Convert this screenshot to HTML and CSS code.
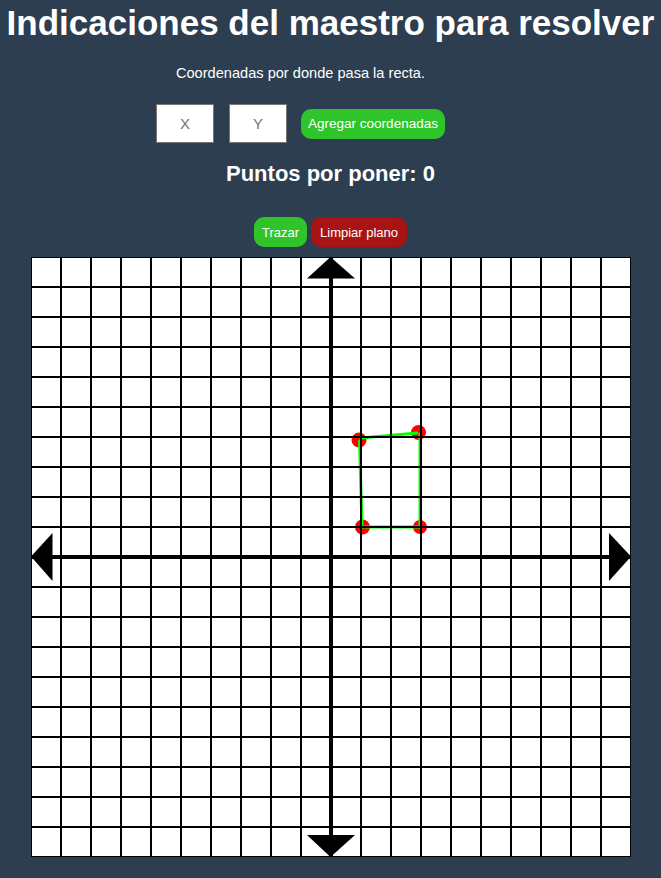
FILE: index.html
```html
<!DOCTYPE html>
<html lang="es">
<head>
<meta charset="utf-8">
<title>Indicaciones</title>
<link rel="stylesheet" href="styles.css">
</head>
<body>
<h1 class="title">Indicaciones del maestro para resolver</h1>
<section class="coords">
  <p class="label">Coordenadas por donde pasa la recta.</p>
  <div class="coord-row">
    <input class="coord-input" type="text" placeholder="X">
    <input class="coord-input" type="text" placeholder="Y">
    <button class="btn btn-green btn-add">Agregar coordenadas</button>
  </div>
</section>
<h2 class="count">Puntos por poner: 0</h2>
<div class="actions">
  <button class="btn btn-green">Trazar</button>
  <button class="btn btn-red">Limpiar plano</button>
</div>
<div class="plane-wrap">
<svg class="plane" width="600" height="600" viewBox="0 0 600 600" xmlns="http://www.w3.org/2000/svg">
  <rect x="0" y="0" width="600" height="600" fill="#fff"/>
  <g fill="#ff0000">
    <circle cx="328" cy="183" r="7.5"/>
    <circle cx="387.5" cy="175.5" r="7.5"/>
    <circle cx="331.5" cy="270" r="7.5"/>
    <circle cx="389" cy="270" r="7"/>
  </g>
  <g stroke="#00ff00" stroke-width="3" fill="none" stroke-linecap="round">
    <line x1="330" y1="181" x2="386" y2="176"/>
    <line x1="389" y1="177" x2="389" y2="270"/>
    <line x1="331" y1="270" x2="389" y2="270"/>
    <line x1="328.5" y1="184" x2="331" y2="269"/>
  </g>
  <g stroke="#000" stroke-width="2">
    <path d="M0 0V600M30 0V600M60 0V600M90 0V600M120 0V600M150 0V600M180 0V600M210 0V600M240 0V600M270 0V600M330 0V600M360 0V600M390 0V600M420 0V600M450 0V600M480 0V600M510 0V600M540 0V600M570 0V600M600 0V600"/>
    <path d="M0 0H600M0 30H600M0 60H600M0 90H600M0 120H600M0 150H600M0 180H600M0 210H600M0 240H600M0 270H600M0 330H600M0 360H600M0 390H600M0 420H600M0 450H600M0 480H600M0 510H600M0 540H600M0 570H600M0 600H600"/>
  </g>
  <g stroke="#000" stroke-width="4">
    <line x1="300" y1="0" x2="300" y2="600"/>
    <line x1="0" y1="300" x2="600" y2="300"/>
  </g>
  <g fill="#000">
    <polygon points="299.5,0 276,21.5 324,21.5"/>
    <polygon points="299.5,600 276,578 324,578"/>
    <polygon points="0,299.5 21.5,276 21.5,324"/>
    <polygon points="600,299.5 578,276 578,324"/>
  </g>
</svg>
</div>
</body>
</html>
```
FILE: styles.css
```css
html, body {
  margin: 0;
  padding: 0;
}
body {
  background: #2c3e50;
  color: #fff;
  font-family: "Liberation Sans", Arial, sans-serif;
  min-height: 878px;
}
.title {
  margin: 0;
  padding-top: 3px;
  font-size: 35px;
  line-height: 40px;
  font-weight: bold;
  text-align: center;
  white-space: nowrap;
}
.coords {
  padding-right: 60px;
  margin-top: 22px;
  display: flex;
  flex-direction: column;
  align-items: center;
}
.label {
  margin: 0;
  font-size: 14.6px;
  line-height: 16px;
}
.coord-row {
  margin-top: 23px;
  display: flex;
  align-items: center;
}
.coord-input {
  box-sizing: border-box;
  width: 58px;
  height: 39px;
  margin: 0 15px 0 0;
  padding: 0;
  border: 1px solid #767676;
  background: #fff;
  font-family: "Liberation Sans", Arial, sans-serif;
  font-size: 15px;
  text-align: center;
  color: #333;
}
.coord-input::placeholder {
  color: #757575;
}
.coord-input + .coord-input {
  margin-right: 14px;
}
.btn {
  box-sizing: border-box;
  height: 30px;
  border: none;
  border-radius: 10px;
  color: #fff;
  font-family: "Liberation Sans", Arial, sans-serif;
  font-size: 13px;
  padding: 0 8px;
  cursor: pointer;
}
.btn-add {
  width: 144px;
  padding: 0;
  font-size: 13.5px;
}
.btn-green {
  background: #2fc52a;
}
.btn-red {
  background: #a81313;
  padding: 0 9px;
}
.count {
  margin: 18px 0 0;
  font-size: 22px;
  line-height: 26px;
  text-align: center;
  font-weight: bold;
}
.actions {
  margin-top: 30px;
  display: flex;
  justify-content: center;
  gap: 4px;
}
.plane-wrap {
  margin-top: 10px;
  display: flex;
  justify-content: center;
  padding-left: 1px;
}
.plane {
  display: block;
}
```
